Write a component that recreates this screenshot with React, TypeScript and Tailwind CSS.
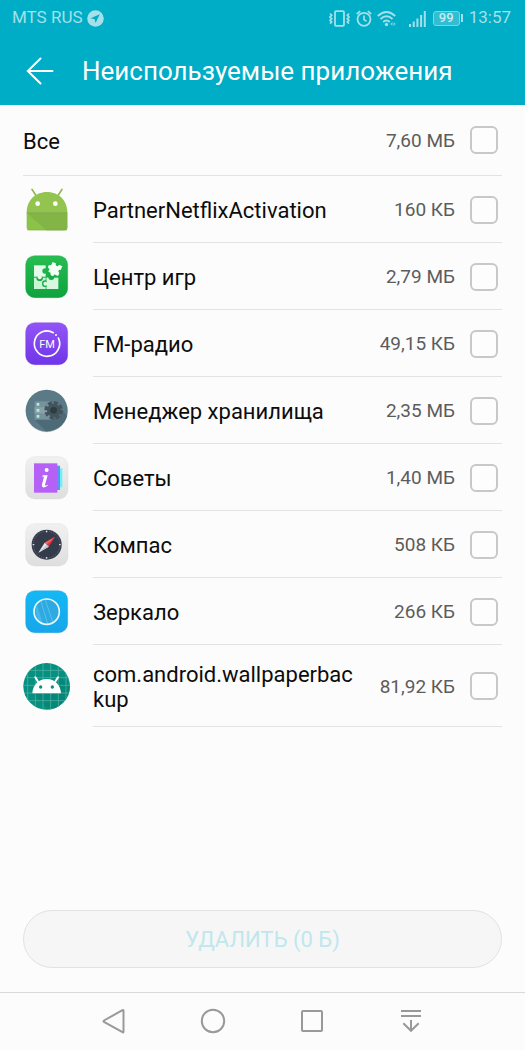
import { useState } from 'react';
import type { ReactNode } from 'react';

type UnusedApp = {
  id: string;
  name: string;
  size: string;
  icon: ReactNode;
};

function IconFrame({ children }: { children: ReactNode }) {
  return (
    <svg className="h-[47px] w-[47px] shrink-0" viewBox="0 0 141 141" aria-hidden="true">
      {children}
    </svg>
  );
}

function AndroidIcon() {
  return (
    <IconFrame>
      <path d="M27 10 38 27M117 10 106 27" stroke="#8bba4a" strokeWidth="5" strokeLinecap="round" />
      <path d="M11 80C11 44 36 18 72 18s61 26 61 62Z" fill="#92c44f" />
      <path d="M11 80h122v46q0 7-7 7H18q-7 0-7-7Z" fill="#8bc34a" />
      <path d="M11 80h122v46q0 7-7 7H70Z" fill="#82b545" />
      <path d="M11 80h122" stroke="#78a541" strokeWidth="2" />
      <path d="M13 132h118" stroke="#6f9c3a" strokeWidth="2" opacity=".5" />
      <circle cx="44" cy="53" r="7" fill="#fff" />
      <circle cx="97" cy="53" r="7" fill="#fff" />
    </IconFrame>
  );
}

function GamesIcon() {
  return (
    <IconFrame>
      <defs>
        <linearGradient id="games" x2="0" y2="1">
          <stop stopColor="#27bd51" />
          <stop offset="1" stopColor="#0fa23f" />
        </linearGradient>
      </defs>
      <rect x="8" y="8" width="126" height="126" rx="27" fill="url(#games)" stroke="#0b9a3a" />
      <path d="M33 74h35v34H33Z" fill="#c9f5d4" />
      <path d="M71 74h35v34H71Z" fill="#d5f8de" />
      <circle cx="50" cy="74" r="10" fill="#17ac46" />
      <circle cx="67" cy="92" r="10" fill="#17ac46" />
      <path d="M71 74h11v34H71Z" fill="#d5f8de" />
      <circle cx="67" cy="92" r="6" fill="#d5f8de" />
      <circle cx="85" cy="72" r="9" fill="#17ac46" />
      <path d="M33 37h35v34H33Z" fill="#e4fbe9" />
      <circle cx="50" cy="73" r="6" fill="#e4fbe9" />
      <circle cx="66" cy="54" r="8" fill="#1eb34a" />
      <g transform="translate(97 48) rotate(24)">
        <path d="M-16-16h32v32h-32Z" fill="#f4fff6" />
        <circle cx="-17" cy="1" r="6" fill="#f4fff6" />
        <circle cx="0" cy="-15" r="5" fill="#1eb34a" />
        <circle cx="16" cy="1" r="5" fill="#1eb34a" />
        <circle cx="-2" cy="17" r="6" fill="#f4fff6" />
      </g>
    </IconFrame>
  );
}

function RadioIcon() {
  return (
    <IconFrame>
      <defs>
        <linearGradient id="radio" x2="0" y2="1">
          <stop stopColor="#9255f6" />
          <stop offset="1" stopColor="#7036e8" />
        </linearGradient>
      </defs>
      <rect x="8" y="8" width="126" height="126" rx="27" fill="url(#radio)" stroke="#6a35d6" />
      <path d="M91 38A38 38 0 1 0 106 54" fill="none" stroke="#fff" strokeWidth="5" strokeLinecap="round" />
      <circle cx="99" cy="45" r="3" fill="#fff" />
      <text x="72" y="83" textAnchor="middle" fontSize="33" fontFamily="Roboto, sans-serif" fill="#fff">
        FM
      </text>
    </IconFrame>
  );
}

function StorageIcon() {
  return (
    <IconFrame>
      <circle cx="71" cy="73" r="63" fill="#d5d9da" />
      <circle cx="71" cy="71" r="63" fill="#5a7a87" />
      <path d="M35 98 69 133q50-4 63-46L108 57Z" fill="#4d6b77" />
      <path d="M35 43h50v55H35Z" fill="#78929c" />
      <path d="M35 61h50v18H35Z" fill="#8ba1a9" />
      <path d="M41 48h8v8h-8ZM41 66h8v8h-8ZM41 84h8v8h-8Z" fill="#a3f3e6" />
      <circle cx="92" cy="70" r="20" fill="#43545c" />
      <circle cx="92" cy="70" r="23" fill="none" stroke="#43545c" strokeWidth="10" strokeDasharray="12 6.06" />
      <circle cx="92" cy="70" r="10" fill="#2d3d44" />
    </IconFrame>
  );
}

function LightTile() {
  return (
    <>
      <defs>
        <linearGradient id="tile" x2="0" y2="1">
          <stop stopColor="#f1f1f1" />
          <stop offset="1" stopColor="#dedede" />
        </linearGradient>
      </defs>
      <rect x="8" y="8" width="127" height="127" rx="27" fill="url(#tile)" stroke="#d8d8d8" />
    </>
  );
}

function TipsIcon() {
  return (
    <IconFrame>
      <LightTile />
      <path d="M90 43h28v57H90Z" fill="#6df0f6" />
      <path d="M90 35h21v73H90Z" fill="#4a9bf3" />
      <path d="M33 28h70v88H33Z" fill="#b561f6" />
      <circle cx="71" cy="48" r="6" fill="#fff" />
      <path d="M59 64h15L66 92q-1 5 7 0l2 2q-8 8-15 6-5-2-3-9l6-23h-5Z" fill="#fff" />
    </IconFrame>
  );
}

function CompassIcon() {
  return (
    <IconFrame>
      <LightTile />
      <circle cx="71" cy="71" r="45" fill="#343c4b" />
      <circle cx="71" cy="71" r="40" fill="none" stroke="#9299a5" strokeWidth="3" strokeDasharray="1.5 5" />
      <path d="M71 29v5M71 108v5M29 71h5M108 71h5" stroke="#fff" strokeWidth="3" />
      <path d="M96 47 77 77 65 65Z" fill="#e2383f" />
      <path d="M96 47 71 71 65 65Z" fill="#f36461" />
      <path d="M46 95 65 65 77 77Z" fill="#e8eaec" />
      <path d="M46 95 71 71 77 77Z" fill="#c4c9ce" />
    </IconFrame>
  );
}

function MirrorIcon() {
  return (
    <IconFrame>
      <defs>
        <linearGradient id="mirror" x2="0" y2="1">
          <stop stopColor="#14b8f4" />
          <stop offset="1" stopColor="#17a6ea" />
        </linearGradient>
      </defs>
      <rect x="8" y="8" width="126" height="126" rx="27" fill="url(#mirror)" stroke="#1499d8" />
      <circle cx="71" cy="71" r="38" fill="#2fa9e2" />
      <path d="M53 37 74 108M67 37 90 104" stroke="#58c0ee" strokeWidth="3" />
      <path d="M41 48 60 107 47 100Q33 76 41 48Z" fill="#43b8ea" />
      <circle cx="71" cy="71" r="38" fill="none" stroke="#e8f8ff" strokeWidth="5" />
    </IconFrame>
  );
}

function WallpaperIcon() {
  return (
    <IconFrame>
      <defs>
        <clipPath id="disc">
          <circle cx="71" cy="70" r="70" />
        </clipPath>
      </defs>
      <g clipPath="url(#disc)">
        <path d="M0 0h141v141H0Z" fill="#079080" />
        <path d="m28 91 50 50h63V72l-28-28Z" fill="#087e70" opacity=".5" />
        <path
          d="M14 0v141M37 0v141M60 0v141M83 0v141M106 0v141M129 0v141M0 22h141M0 44h141M0 67h141M0 90h141M0 113h141"
          stroke="#58b8aa"
          strokeWidth="2"
        />
      </g>
      <path d="m37 43 11 18M105 43 94 61" stroke="#fff" strokeWidth="6" strokeLinecap="round" />
      <path d="M28 91C29 66 47 48 71 48s42 18 43 43Z" fill="#fff" />
      <circle cx="53" cy="72" r="5" fill="#079080" />
      <circle cx="88" cy="72" r="5" fill="#079080" />
    </IconFrame>
  );
}

const apps: UnusedApp[] = [
  { id: 'netflix', name: 'PartnerNetflixActivation', size: '160 КБ', icon: <AndroidIcon /> },
  { id: 'games', name: 'Центр игр', size: '2,79 МБ', icon: <GamesIcon /> },
  { id: 'radio', name: 'FM-радио', size: '49,15 КБ', icon: <RadioIcon /> },
  { id: 'storage', name: 'Менеджер хранилища', size: '2,35 МБ', icon: <StorageIcon /> },
  { id: 'tips', name: 'Советы', size: '1,40 МБ', icon: <TipsIcon /> },
  { id: 'compass', name: 'Компас', size: '508 КБ', icon: <CompassIcon /> },
  { id: 'mirror', name: 'Зеркало', size: '266 КБ', icon: <MirrorIcon /> },
  { id: 'wallpaper', name: 'com.android.wallpaperbackup', size: '81,92 КБ', icon: <WallpaperIcon /> },
];

function StatusBar() {
  return (
    <div className="flex h-9 items-center justify-between pl-3 pr-[14px] text-[17px] text-[#a3e0e9]">
      <div className="flex items-center gap-1">
        <span>MTS RUS</span>
        <svg className="h-[17px] w-[17px]" viewBox="0 0 17 17" aria-hidden="true">
          <circle cx="8.5" cy="8.5" r="8.3" fill="currentColor" />
          <path d="M12.8 4.2 3.6 8.2l4 1.1 1 3.8Z" fill="#00adc6" />
        </svg>
      </div>
      <div className="flex items-center">
        <svg className="mr-[6px] h-[17px] w-[21px]" viewBox="0 0 21 17" fill="none" stroke="currentColor" aria-hidden="true">
          <rect x="6" y="1.2" width="9" height="14.6" rx="1" strokeWidth="1.8" />
          <path d="m1 3.5 1.7 1.7L1 7l1.7 1.7L1 10.4l1.7 1.7L1 13.7M20 3.5l-1.7 1.7L20 7l-1.7 1.7 1.7 1.7-1.7 1.7 1.7 1.6" strokeWidth="1.7" />
        </svg>
        <svg className="mr-[5px] h-[17px] w-4" viewBox="0 0 16 17" fill="none" stroke="currentColor" aria-hidden="true">
          <circle cx="8" cy="9.3" r="6.5" strokeWidth="1.8" />
          <path d="M8 5.6v4l2.5 1.6M.8 4 4.2 1.2M15.2 4l-3.4-2.8" strokeWidth="1.7" />
        </svg>
        <svg className="mr-3 h-[17px] w-5" viewBox="0 0 20 17" fill="none" stroke="currentColor" aria-hidden="true">
          <path d="M.8 6q8.7-8 17.4 0M3.5 9q6-5.3 12 0M6.2 12q3.3-2.8 6.6 0" strokeWidth="1.9" />
          <circle cx="9.5" cy="14.5" r="1.7" fill="currentColor" stroke="none" />
          <path d="M15.5 12v4l-2.4-2ZM16.5 12v4l2.4-2Z" fill="currentColor" stroke="none" opacity=".7" />
        </svg>
        <svg className="mr-[7px] h-[17px] w-[17px]" viewBox="0 0 17 17" stroke="currentColor" strokeWidth="2" aria-hidden="true">
          <path d="M1 14v3M4.7 11.5V17M8.4 8.5V17M12.1 5V17M15.8 1V17" />
        </svg>
        <div className="flex items-center gap-px">
          <span className="flex h-[15px] w-[27px] items-center justify-center rounded-[3px] border border-[#7dd3df] bg-[#32bdd0] text-[13px] font-medium text-[#c4ecf2]">
            99
          </span>
          <span className="h-2 w-[2px] bg-[#a3e0e9]" />
        </div>
        <span className="ml-[6px]">13:57</span>
      </div>
    </div>
  );
}

type SelectBoxProps = {
  label: string;
  checked: boolean;
  onChange: () => void;
};

function SelectBox({ label, checked, onChange }: SelectBoxProps) {
  return (
    <input
      aria-label={label}
      checked={checked}
      className="mr-1 h-7 w-7 shrink-0 appearance-none rounded-[6px] border-2 border-[#c8c8c8] bg-white/30 checked:border-[#00adc6] checked:bg-[#00adc6]"
      onChange={onChange}
      type="checkbox"
    />
  );
}

function NavigationBar() {
  return (
    <nav className="mt-6 flex h-[58px] items-center justify-center gap-[69px] border-t border-[#d9d9d9] pb-[2px] text-[#999]">
      <button type="button" aria-label="Назад">
        <svg className="h-[30px] w-[30px]" viewBox="0 0 30 30" fill="none" stroke="currentColor" strokeWidth="2" aria-hidden="true">
          <path d="M24.5 4.8v20.8q0 1.2-1 .6L5 15.9q-1-.7 0-1.4L23.5 4.2q1-.6 1 .6Z" />
        </svg>
      </button>
      <button type="button" aria-label="Домой">
        <svg className="h-[30px] w-[30px]" viewBox="0 0 30 30" fill="none" stroke="currentColor" strokeWidth="2" aria-hidden="true">
          <circle cx="15" cy="15" r="11.2" />
        </svg>
      </button>
      <button type="button" aria-label="Недавние">
        <svg className="h-[30px] w-[30px]" viewBox="0 0 30 30" fill="none" stroke="currentColor" strokeWidth="2" aria-hidden="true">
          <rect x="5" y="5" width="20" height="20" rx="1" />
        </svg>
      </button>
      <button type="button" aria-label="Уведомления">
        <svg className="h-[30px] w-[30px]" viewBox="0 0 30 30" fill="none" stroke="currentColor" strokeWidth="2" aria-hidden="true">
          <path d="M5 5h20M5 10h20M15 14v11M7.3 17.3 15 24.8l7.7-7.5" />
        </svg>
      </button>
    </nav>
  );
}

export default function App() {
  const [selected, setSelected] = useState<string[]>([]);
  const allSelected = selected.length === apps.length;

  const toggle = (id: string) => {
    setSelected((current) => (current.includes(id) ? current.filter((item) => item !== id) : [...current, id]));
  };

  return (
    <div className="flex min-h-screen flex-col bg-[#fcfcfc] font-['Roboto',sans-serif] text-[#0c0c0c]">
      <header className="bg-[#00adc6]">
        <StatusBar />
        <div className="flex h-[69px] items-center gap-7 pl-[26px] pr-6 text-white">
          <button type="button" aria-label="Назад">
            <svg className="h-7 w-7" viewBox="0 0 28 28" fill="none" stroke="currentColor" strokeWidth="2" strokeLinecap="round" aria-hidden="true">
              <path d="M26.5 14H1.8M14.5 1.5 1.8 14l12.7 12.5" />
            </svg>
          </button>
          <h1 className="whitespace-nowrap text-[26px] leading-8">Неиспользуемые приложения</h1>
        </div>
      </header>

      <main className="flex flex-1 flex-col px-[23px]">
        <div className="flex h-[71px] items-center gap-[15px] border-b border-[#e3e3e3]">
          <span className="flex-1 pt-[2px] text-[22px]">Все</span>
          <span className="pt-[2px] text-[19px] text-[#5c5c5c]">7,60 МБ</span>
          <SelectBox
            label="Все"
            checked={allSelected}
            onChange={() => setSelected(allSelected ? [] : apps.map((app) => app.id))}
          />
        </div>

        <ul>
          {apps.map((app) => (
            <li className="group flex gap-[23px]" key={app.id}>
              <span className="flex items-center">{app.icon}</span>
              <div className="flex min-h-[67px] min-w-0 flex-1 items-center gap-[15px] border-b border-[#e3e3e3] pt-px group-last:min-h-[82px]">
                <span className="mr-2 min-w-0 flex-1 break-all pt-[2px] text-[22px] leading-[25px]">{app.name}</span>
                <span className="whitespace-nowrap pt-[2px] text-[19px] text-[#5c5c5c]">{app.size}</span>
                <SelectBox label={app.name} checked={selected.includes(app.id)} onChange={() => toggle(app.id)} />
              </div>
            </li>
          ))}
        </ul>

        <button
          className="mt-auto h-[58px] w-full rounded-full border border-[#e2e2e2] bg-[#f6f6f6] text-[22px] text-[#bfe7ed]"
          disabled={selected.length === 0}
          type="button"
        >
          УДАЛИТЬ (0 Б)
        </button>
      </main>

      <NavigationBar />
    </div>
  );
}
